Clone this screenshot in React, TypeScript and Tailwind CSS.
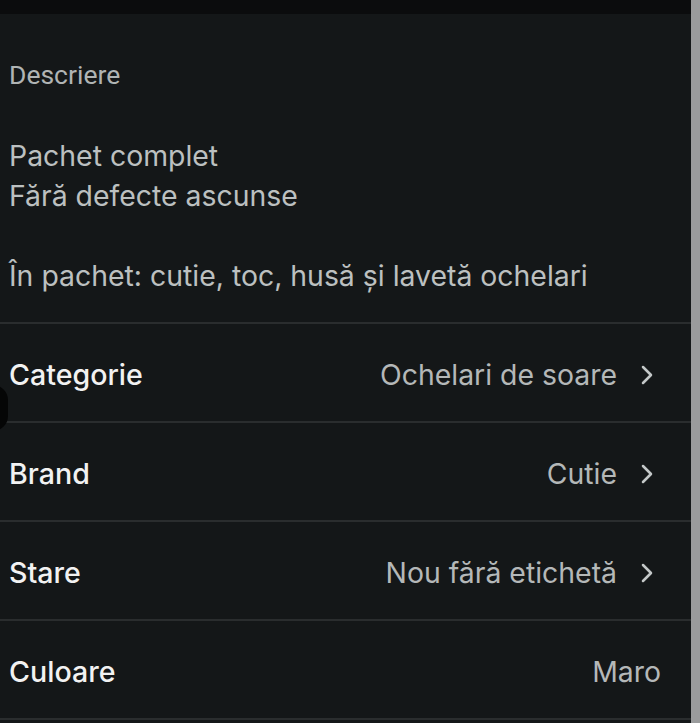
import { ChevronRight } from "lucide-react";

const rows = [
  { label: "Categorie", value: "Ochelari de soare", chevron: true },
  { label: "Brand", value: "Cutie", chevron: true },
  { label: "Stare", value: "Nou fără etichetă", chevron: true },
  { label: "Culoare", value: "Maro", chevron: false },
];

export default function App() {
  return (
    <div className="relative flex h-[723px] w-[700px] overflow-hidden bg-[#141718] font-['Inter','Roboto',sans-serif]">
      <div className="flex w-[691px] flex-col">
        <div className="h-[14px] bg-[#0b0c0d]" />
        <div className="px-[9px] pt-[46px]">
          <p className="text-[26.5px] leading-[30px] text-[#b0b4b4] font-['Roboto',sans-serif]">Descriere</p>
          <div className="mt-[46px] text-[28.4px] leading-[40px] text-[#bcc0c0]">
            <p>Pachet complet</p>
            <p>Fără defecte ascunse</p>
            <p className="mt-[40px]">În pachet: cutie, toc, husă și lavetă ochelari</p>
          </div>
        </div>
        <div className="mt-[26px] border-t-2 border-[#2a2d2e]">
          {rows.map((row) => (
            <div
              key={row.label}
              className="flex h-[99px] items-center justify-between border-b-2 border-[#2a2d2e] pt-[5px] pl-[9px] pr-[30px]"
            >
              <span className="text-[28.6px] font-medium text-[#f2f2f2]">{row.label}</span>
              <span className="flex items-center gap-[14px] text-[28.4px] text-[#b4b8b8]">
                {row.value}
                {row.chevron ? (
                  <ChevronRight className="mr-[-2px] h-[32px] w-[32px] text-[#c4c8c8]" strokeWidth={1.9} />
                ) : null}
              </span>
            </div>
          ))}
        </div>
      </div>
      <div className="w-[9px] bg-[#9a9b9c]" />
      <div className="absolute left-[-22px] top-[385px] h-[46px] w-[30px] rounded-full bg-[#050606]" />
    </div>
  );
}
